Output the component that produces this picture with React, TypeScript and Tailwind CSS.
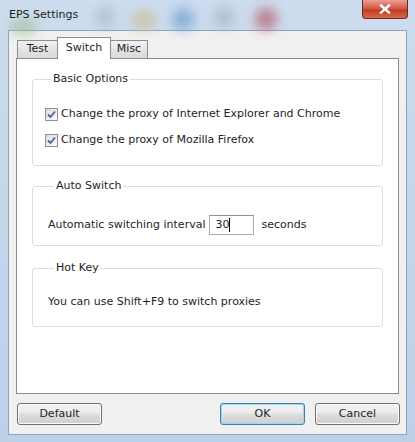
import React from "react"

const font = { fontFamily: '"DejaVu Sans", Tahoma, sans-serif' }

function Check() {
  return (
    <span className="flex h-[13px] w-[13px] items-center justify-center border border-[#8e8f8f] bg-gradient-to-br from-[#dcdcdc] to-[#fbfbfb]">
      <svg width="9" height="9" viewBox="0 0 9 9">
        <path d="M1 4.5 L3.5 7 L8 1.5" fill="none" stroke="#4a5f97" strokeWidth="1.8" />
      </svg>
    </span>
  )
}

function Group({ title, children, className }: { title: string; children: React.ReactNode; className?: string }) {
  return (
    <fieldset className={"rounded-[3px] border border-[#d5dfe5] " + (className ?? "")}>
      <legend className="ml-[6px] px-[2px] text-[11px] leading-[14px] text-[#1e1e1e]">{title}</legend>
      {children}
    </fieldset>
  )
}

function WinButton({ label, focused }: { label: string; focused?: boolean }) {
  return (
    <button
      className={
        "h-[22px] w-[85px] rounded-[3px] border text-[11px] text-[#1e1e1e] bg-[linear-gradient(#f2f2f2_0%,#ebebeb_45%,#dddddd_50%,#cfcfcf_100%)] " +
        (focused ? "border-[#3c7fb1] shadow-[inset_0_0_0_1px_#9fd6f3]" : "border-[#707070] shadow-[inset_0_0_0_1px_#fcfcfc]")
      }
    >
      {label}
    </button>
  )
}

export default function App() {
  return (
    <div className="relative h-[442px] w-[415px] overflow-hidden bg-[linear-gradient(#cddcee,#bcd0e7)]" style={font}>
      {/* title bar */}
      <div className="relative h-[30px]">
        <div className="absolute left-[96px] top-[6px] h-[22px] w-[18px] rounded-full bg-[#a9b8cd] opacity-70 blur-[6px]" />
        <div className="absolute left-[132px] top-[10px] h-[20px] w-[24px] rounded-full bg-[#cdbd92] opacity-70 blur-[6px]" />
        <div className="absolute left-[172px] top-[8px] h-[22px] w-[22px] rounded-full bg-[#6a9dcf] opacity-70 blur-[6px]" />
        <div className="absolute left-[214px] top-[6px] h-[22px] w-[20px] rounded-full bg-[#aab4bf] opacity-70 blur-[6px]" />
        <div className="absolute left-[255px] top-[8px] h-[22px] w-[22px] rounded-full bg-[#b2414a] opacity-60 blur-[6px]" />
        <div className="absolute left-[10px] top-[20px] h-[14px] w-[26px] rounded-full bg-[#9fc08c] opacity-70 blur-[6px]" />
        <span className="absolute left-[9px] top-[8px] text-[11px] leading-[14px] text-[#1e1e1e]">EPS Settings</span>
        <div className="absolute right-[7px] top-0 flex h-[19px] w-[46px] items-center justify-center rounded-b-[4px] border border-t-0 border-[#6a2a25] bg-[linear-gradient(#e8a093,#d0533e_50%,#c03a25_55%,#d86a4a)]">
          <svg width="12" height="10" viewBox="0 0 12 10">
            <path d="M2 1.5 L10 8.5 M10 1.5 L2 8.5" stroke="#fff" strokeWidth="2.4" strokeLinecap="square" />
          </svg>
        </div>
      </div>

      {/* client area */}
      <div className="mx-[8px] flex h-[405px] w-[399px] flex-col border border-[#8fa3bb] bg-[#f0f0f0]">
        <div className="flex h-[27px] items-end pl-[8px] text-[11px] text-[#1e1e1e]">
          <div className="flex h-[18px] w-[41px] items-center justify-center border border-b-0 border-[#898c95] bg-[linear-gradient(#f3f3f3,#e4e4e4_50%,#d9d9d9)]">
            Test
          </div>
          <div className="relative z-10 -mx-[1px] -mb-px flex h-[22px] w-[54px] items-start justify-center border border-b-0 border-[#898c95] bg-white pt-[2px]">
            Switch
          </div>
          <div className="flex h-[18px] w-[38px] items-center justify-center border border-b-0 border-[#898c95] bg-[linear-gradient(#f3f3f3,#e4e4e4_50%,#d9d9d9)]">
            Misc
          </div>
        </div>

        <div className="ml-[7px] h-[336px] w-[383px] border border-[#898c95] bg-white px-[15px] pt-[13px] text-[11px] text-[#1e1e1e]">
          <Group title="Basic Options" className="pb-[15px] pl-[12px]">
            <div className="mt-[18px] flex h-[20px] items-center gap-[3px]">
              <Check />
              <span>Change the proxy of Internet Explorer and Chrome</span>
            </div>
            <div className="mt-[6px] flex h-[20px] items-center gap-[3px]">
              <Check />
              <span>Change the proxy of Mozilla Firefox</span>
            </div>
          </Group>

          <Group title="Auto Switch" className="mt-[13px] pb-[10px] pl-[15px]">
            <div className="mt-[22px] flex h-[20px] items-center">
              <span>Automatic switching interval</span>
              <div className="ml-[4px] flex h-[20px] w-[45px] items-center border border-[#abadb3] border-t-[#8e9196] pl-[5px]">
                <span>30</span>
                <span className="h-[14px] w-px bg-black" />
              </div>
              <span className="ml-[7px]">seconds</span>
            </div>
          </Group>

          <Group title="Hot Key" className="mt-[15px] pb-[17px] pl-[15px]">
            <div className="mt-[20px] flex h-[14px] items-center">You can use Shift+F9 to switch proxies</div>
          </Group>
        </div>

        <div className="mt-[9px] flex pl-[8px] pr-[6px]">
          <WinButton label="Default" />
          <div className="flex-1" />
          <WinButton label="OK" focused />
          <div className="w-[10px]" />
          <WinButton label="Cancel" />
        </div>
      </div>
    </div>
  )
}
